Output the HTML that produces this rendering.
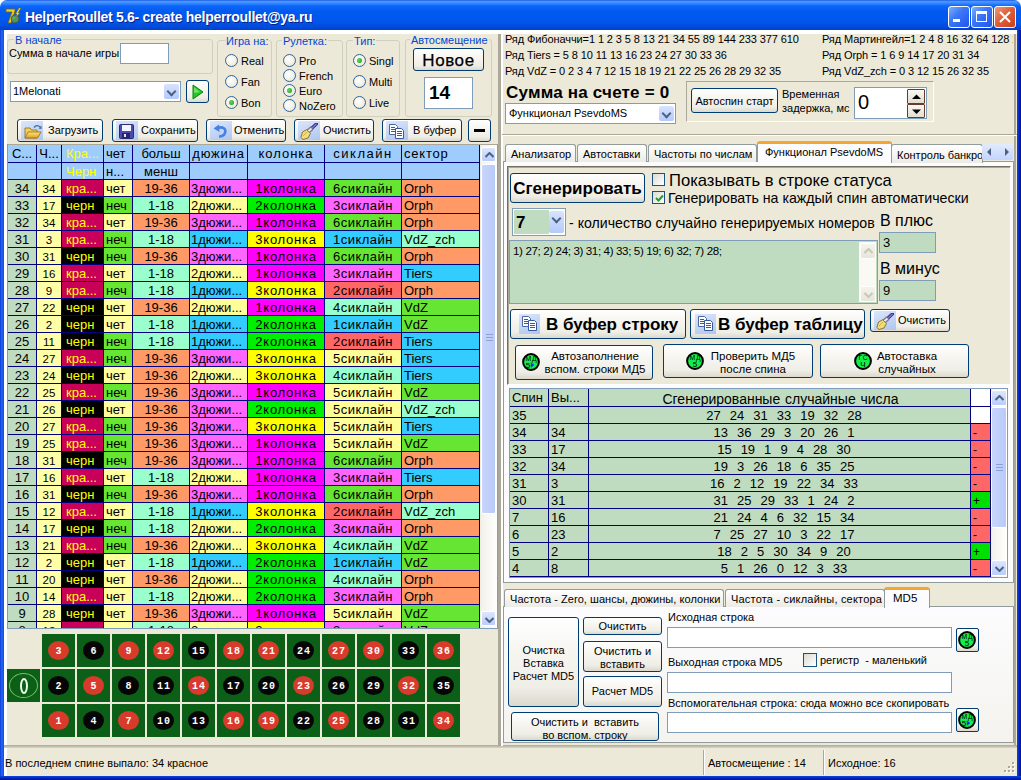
<!DOCTYPE html><html><head><meta charset="utf-8"><style>*{box-sizing:border-box;margin:0;padding:0}
html,body{width:1021px;height:780px;overflow:hidden;background:#fff}
body{position:relative;font-family:"Liberation Sans",sans-serif;font-size:11px;line-height:13px;color:#000}
.a{position:absolute}
.nw{white-space:nowrap}
#title{left:0;top:0;width:1021px;height:30px;border-radius:7px 7px 0 0;background:linear-gradient(#0C3ED8 0px,#4C9CFF 1px,#3A8CFF 3px,#0E64F8 6px,#005AF0 12px,#0058EE 20px,#004DDD 26px,#0040D0 30px)}
.ttext{color:#fff;font-weight:bold;font-size:14px;line-height:16px;text-shadow:1px 1px 0 #0A1E8C;letter-spacing:-0.28px}
.tb{border:1px solid #fff;border-radius:3px}
#client{left:4px;top:30px;width:1013px;height:746px;background:#ECE9D8}
.grp{border:1px solid #D0D0BF;border-radius:3px}
.cap{color:#0046D5;background:#ECE9D8;padding:0 1px}
.edit{background:#fff;border:1px solid #7F9DB9}
.btn{border:1px solid #003C74;border-radius:3px;background:linear-gradient(#FFFFFF 0%,#F6F5F0 40%,#EEEDE6 80%,#DCD8CC 100%);text-align:center}
.icoarea{background:linear-gradient(160deg,#DCE6FA 0%,#C4D6F6 50%,#AFC6F0 100%)}
.rad{border-radius:50%;border:1px solid #2F64A0;background:radial-gradient(circle at 40% 40%,#fff 0%,#F1EFE2 60%,#DCD9CD 100%)}
.rad.on::after{content:"";position:absolute;left:3px;top:3px;width:5px;height:5px;border-radius:50%;background:radial-gradient(circle at 40% 40%,#60D860,#189818)}
.cbtn{border-radius:2px;background:linear-gradient(#D8E4FE,#B4CAFA)}
.cbtn::after{content:"";position:absolute;left:4px;top:4px;width:5px;height:5px;border-right:2px solid #4D6185;border-bottom:2px solid #4D6185;transform:rotate(45deg)}
.gc{font-size:13px;line-height:16px;overflow:hidden;padding-top:1px}
.sbtn{border-radius:2px;border:1px solid #fff;background:linear-gradient(#DCE6FE,#B9CDFB)}
.sthumb{border-radius:2px;border:1px solid #fff;background:linear-gradient(90deg,#C8D6FC,#B8CAF8)}
.chipn{color:#fff;font-weight:bold;font-size:10px;line-height:13px;text-align:center;font-family:"Liberation Mono",monospace;letter-spacing:1px;text-indent:1px}
.rt{font-size:11px;line-height:13px;letter-spacing:-0.1px}
.spb{border:1px solid #6A3A2A;background:linear-gradient(#F8F8F4,#E0DED0);border-radius:1px}
.chk{border:1px solid #1C5180;background:linear-gradient(135deg,#DCDBD3,#fff)}
.dsb{border:1px solid #fff;border-radius:2px;background:linear-gradient(#F4F3EC,#E8E6DC)}
</style></head><body><div id="title" class="a"></div>
<div id="client" class="a"></div>
<div class="a " style="left:0px;top:30px;width:4px;height:750px;background:linear-gradient(90deg,#0A2CC0 0,#1E62F4 1px,#1A5CF0 3px,#0A4AE0 4px)"></div>
<div class="a " style="left:1017px;top:30px;width:4px;height:750px;background:linear-gradient(90deg,#0A48E4 0,#0838D0 1px,#0424B8 2px,#00149A 4px)"></div>
<div class="a " style="left:0px;top:776px;width:1021px;height:4px;background:linear-gradient(#0A48E4 0,#0838D0 1px,#0424B8 2px,#00149A 4px)"></div>
<div class="a " style="left:1014px;top:34px;width:2px;height:712px;background:#ACA899"></div>
<div class="a " style="left:4px;top:30px;width:1013px;height:4px;background:#fff"></div>
<div class="a " style="left:4px;top:30px;width:3px;height:746px;background:#fff"></div>
<div class="a nw  ttext" style="left:25px;top:9px;">HelperRoullet 5.6- create helperroullet@ya.ru</div>
<svg class="a" style="left:5px;top:7px" width="18" height="18" viewBox="0 0 18 18">
<path d="M1 2 L10 2 L10 4 L6 16 L3 16 L7 5 L1 5 Z" fill="#E8D020" stroke="#806010" stroke-width="0.8"/>
<circle cx="10" cy="12" r="4" fill="#5A8A70" stroke="#304838" stroke-width="0.6"/>
<circle cx="9" cy="11" r="1.5" fill="#40C040"/>
<path d="M14 1 L16 1 L13 6 L15 6 L11 10 L12 7 L10.5 7 Z" fill="#F0E020" stroke="#806010" stroke-width="0.5"/>
</svg>
<div class="a tb" style="left:948px;top:6px;width:22px;height:22px;background:linear-gradient(135deg,#7DB0FF 0%,#3C78F8 40%,#2155E8 100%)"><div class="a" style="left:4px;top:12px;width:7px;height:3px;background:#fff"></div></div>
<div class="a tb" style="left:971px;top:6px;width:22px;height:22px;background:linear-gradient(135deg,#7DB0FF 0%,#3C78F8 40%,#2155E8 100%)"><div class="a" style="left:4px;top:4px;width:11px;height:11px;border:1px solid #fff;border-top-width:3px"></div></div>
<div class="a tb" style="left:994px;top:6px;width:22px;height:22px;background:linear-gradient(135deg,#E89C80 0%,#E0603A 45%,#C8401A 100%)"><svg class="a" style="left:0;top:0" width="21" height="21"><path d="M5 5 L15 15 M15 5 L5 15" stroke="#fff" stroke-width="2"/></svg></div>
<div class="a grp" style="left:7px;top:39px;width:206px;height:35px;"></div>
<div class="a nw cap" style="left:14px;top:34px;">В начале</div>
<div class="a nw " style="left:9px;top:47px;">Сумма в начале игры</div>
<div class="a edit" style="left:120px;top:43px;width:49px;height:21px;"></div>
<div class="a edit" style="left:10px;top:81px;width:171px;height:21px;"><div class="a nw" style="left:2px;top:3px">1Melonati</div><div class="a cbtn" style="left:153px;top:2px;width:15px;height:15px"></div></div>
<div class="a btn" style="left:186px;top:80px;width:23px;height:23px;"><svg class="a" style="left:5px;top:3px" width="12" height="16"><path d="M1 1 L11 8 L1 15 Z" fill="#22C822" stroke="#108010" stroke-width="1"/><path d="M2 3 L8 8 L2 9 Z" fill="#8AF08A" opacity="0.7"/></svg></div>
<div class="a grp" style="left:217px;top:40px;width:55px;height:77px;"></div>
<div class="a nw cap" style="left:225px;top:35px;">Игра на:</div>
<div class="a rad" style="left:225px;top:54px;width:13px;height:13px;"></div>
<div class="a nw " style="left:241px;top:55px;">Real</div>
<div class="a rad" style="left:225px;top:75px;width:13px;height:13px;"></div>
<div class="a nw " style="left:241px;top:76px;">Fan</div>
<div class="a rad on" style="left:225px;top:96px;width:13px;height:13px;"></div>
<div class="a nw " style="left:241px;top:97px;">Bon</div>
<div class="a grp" style="left:276px;top:40px;width:67px;height:77px;"></div>
<div class="a nw cap" style="left:282px;top:35px;">Рулетка:</div>
<div class="a rad" style="left:283px;top:54px;width:13px;height:13px;"></div>
<div class="a nw " style="left:299px;top:55px;">Pro</div>
<div class="a rad" style="left:283px;top:69px;width:13px;height:13px;"></div>
<div class="a nw " style="left:299px;top:70px;">French</div>
<div class="a rad on" style="left:283px;top:84px;width:13px;height:13px;"></div>
<div class="a nw " style="left:299px;top:85px;">Euro</div>
<div class="a rad" style="left:283px;top:99px;width:13px;height:13px;"></div>
<div class="a nw " style="left:299px;top:100px;">NoZero</div>
<div class="a grp" style="left:346px;top:40px;width:54px;height:77px;"></div>
<div class="a nw cap" style="left:353px;top:35px;">Тип:</div>
<div class="a rad on" style="left:353px;top:54px;width:13px;height:13px;"></div>
<div class="a nw " style="left:369px;top:55px;">Singl</div>
<div class="a rad" style="left:353px;top:75px;width:13px;height:13px;"></div>
<div class="a nw " style="left:369px;top:76px;">Multi</div>
<div class="a rad" style="left:353px;top:96px;width:13px;height:13px;"></div>
<div class="a nw " style="left:369px;top:97px;">Live</div>
<div class="a grp" style="left:405px;top:39px;width:87px;height:78px;"></div>
<div class="a nw cap" style="left:410px;top:34px;">Автосмещение</div>
<div class="a btn" style="left:413px;top:48px;width:71px;height:23px;"><div class="a nw" style="left:0;width:69px;top:3px;font-size:17px;line-height:17px;letter-spacing:0.6px;text-align:center;-webkit-text-stroke:0.25px #000">Новое</div></div>
<div class="a edit" style="left:424px;top:77px;width:49px;height:32px;"><div class="a nw" style="left:4px;top:8px;font-size:19px;font-weight:bold">14</div></div>
<div class="a btn" style="left:17px;top:119px;width:86px;height:23px;text-align:left"><div class="a icoarea" style="left:3px;top:1px;width:22px;height:19px"></div><svg class="a" style="left:6px;top:4px" width="18" height="16" viewBox="0 0 18 16"><defs><linearGradient id="fg" x1="0" y1="0" x2="0" y2="1"><stop offset="0" stop-color="#FFE680"/><stop offset="1" stop-color="#E0A018"/></linearGradient></defs><path d="M1 4 L6 4 L7.5 6 L13 6 L13 14 L1 14 Z" fill="#F0D060" stroke="#9A7420" stroke-width="0.9"/><path d="M4 8 L17 8 L13.5 14 L1 14 Z" fill="url(#fg)" stroke="#9A7420" stroke-width="0.9"/><path d="M10 3.5 Q13 0 16 3" fill="none" stroke="#4A6A9A" stroke-width="1.3"/><path d="M14.5 4.5 L17.5 1.5 L17.5 5 Z" fill="#4A6A9A"/></svg><div class="a nw" style="left:30px;top:4px;font-size:11px;font-weight:normal">Загрузить</div></div>
<div class="a btn" style="left:112px;top:119px;width:86px;height:23px;text-align:left"><div class="a icoarea" style="left:3px;top:1px;width:22px;height:19px"></div><svg class="a" style="left:6px;top:4px" width="15" height="15" viewBox="0 0 15 15"><rect x="0.5" y="0.5" width="14" height="14" rx="1" fill="#4A4AB0" stroke="#2A2A78"/><rect x="3" y="1" width="9" height="6" fill="#F4F4FC"/><rect x="3" y="9" width="8" height="5" fill="#26266A"/><rect x="5" y="10" width="2" height="3" fill="#E0E0F0"/></svg><div class="a nw" style="left:28px;top:4px;font-size:11px;font-weight:normal">Сохранить</div></div>
<div class="a btn" style="left:206px;top:119px;width:80px;height:23px;text-align:left"><div class="a icoarea" style="left:3px;top:1px;width:22px;height:19px"></div><svg class="a" style="left:6px;top:4px" width="15" height="15" viewBox="0 0 15 15"><path d="M4.5 4 C10 2 13.5 5 12 9 C11 11.5 8.5 12.5 6 12.5" fill="none" stroke="#4A80E0" stroke-width="2.6"/><path d="M0.5 4.5 L6 0.5 L6.5 8 Z" fill="#4A80E0"/></svg><div class="a nw" style="left:27px;top:4px;font-size:11px;font-weight:normal">Отменить</div></div>
<div class="a btn" style="left:294px;top:119px;width:80px;height:23px;text-align:left"><div class="a icoarea" style="left:3px;top:1px;width:22px;height:19px"></div><svg class="a" style="left:5px;top:3px" width="18" height="17" viewBox="0 0 18 17"><path d="M11 6 L16.5 0.8" stroke="#3A2E88" stroke-width="3.2" stroke-linecap="round"/><path d="M11 6 L16.2 1.2" stroke="#8A7AD8" stroke-width="1.2" stroke-linecap="round"/><path d="M7.5 9 L12 5" stroke="#7A7A88" stroke-width="4.6"/><path d="M8 8.5 L11.5 5.5" stroke="#E8E8F0" stroke-width="2"/><path d="M0.8 14.5 L2.5 9 L6.5 6.8 L10.5 10.5 L8 15 L3 16.5 Z" fill="#F0DC78" stroke="#8A6A20" stroke-width="0.9"/><path d="M3 13 L7 9" stroke="#C8A840" stroke-width="0.8"/></svg><div class="a nw" style="left:28px;top:4px;font-size:11px;font-weight:normal">Очистить</div></div>
<div class="a btn" style="left:382px;top:119px;width:80px;height:23px;text-align:left"><div class="a icoarea" style="left:3px;top:1px;width:22px;height:19px"></div><svg class="a" style="left:6px;top:4px" width="16" height="15" viewBox="0 0 16 15"><path d="M0.5 0.5 H6.5 L8.5 2.5 V10.5 H0.5 Z" fill="#fff" stroke="#4A68A8"/><path d="M2 3.5 H6 M2 5.5 H6 M2 7.5 H6" stroke="#3A58A0" stroke-width="1"/><path d="M6.5 4.5 H12.5 L14.5 6.5 V14.5 H6.5 Z" fill="#fff" stroke="#3A58A0"/><path d="M8 7.5 H13 M8 9.5 H13 M8 11.5 H13" stroke="#3A58A0" stroke-width="1"/></svg><div class="a nw" style="left:30px;top:4px;font-size:11px;font-weight:normal">В буфер</div></div>
<div class="a btn" style="left:468px;top:119px;width:23px;height:23px;"><div class="a" style="left:5px;top:9px;width:11px;height:3px;background:#000"></div></div>
<div class="a " style="left:7px;top:144px;width:491px;height:485px;background:#fff;border:1px solid #7F9DB9;border-top-color:#ACA899"></div>
<div class="a" style="left:8px;top:145px;width:472px;height:483px;background:#000080"></div><div class="a nw gc" style="left:8px;top:145px;width:28px;height:17px;background:#9ECDFD;color:#000;text-align:center;padding-top:1px;letter-spacing:0px">С...</div><div class="a nw gc" style="left:8px;top:163px;width:28px;height:16px;background:#9ECDFD;color:#000;text-align:center;"></div><div class="a nw gc" style="left:37px;top:145px;width:24px;height:17px;background:#9ECDFD;color:#000;text-align:center;padding-top:1px;letter-spacing:0px">Ч...</div><div class="a nw gc" style="left:37px;top:163px;width:24px;height:16px;background:#9ECDFD;color:#000;text-align:center;"></div><div class="a nw gc" style="left:62px;top:145px;width:41px;height:17px;background:#9ECDFD;color:#FFFF00;text-align:left;padding-left:4px;padding-top:1px;letter-spacing:0px">Кра...</div><div class="a nw gc" style="left:62px;top:163px;width:41px;height:16px;background:#9ECDFD;color:#FFFF00;text-align:left;padding-left:4px;">Черн</div><div class="a nw gc" style="left:104px;top:145px;width:28px;height:17px;background:#9ECDFD;color:#000;text-align:left;padding-left:2px;padding-top:1px;letter-spacing:0px">чет</div><div class="a nw gc" style="left:104px;top:163px;width:28px;height:16px;background:#9ECDFD;color:#000;text-align:left;padding-left:2px;">н...</div><div class="a nw gc" style="left:133px;top:145px;width:56px;height:17px;background:#9ECDFD;color:#000;text-align:center;padding-top:1px;letter-spacing:0px">больш</div><div class="a nw gc" style="left:133px;top:163px;width:56px;height:16px;background:#9ECDFD;color:#000;text-align:center;">менш</div><div class="a nw gc" style="left:190px;top:145px;width:57px;height:17px;background:#9ECDFD;color:#000;text-align:center;padding-top:1px;letter-spacing:0.8px">дюжина</div><div class="a nw gc" style="left:190px;top:163px;width:57px;height:16px;background:#9ECDFD;color:#000;text-align:center;"></div><div class="a nw gc" style="left:248px;top:145px;width:76px;height:17px;background:#9ECDFD;color:#000;text-align:center;padding-top:1px;letter-spacing:1.0px">колонка</div><div class="a nw gc" style="left:248px;top:163px;width:76px;height:16px;background:#9ECDFD;color:#000;text-align:center;"></div><div class="a nw gc" style="left:325px;top:145px;width:76px;height:17px;background:#9ECDFD;color:#000;text-align:center;padding-top:1px;letter-spacing:1.5px">сиклайн</div><div class="a nw gc" style="left:325px;top:163px;width:76px;height:16px;background:#9ECDFD;color:#000;text-align:center;"></div><div class="a nw gc" style="left:402px;top:145px;width:77px;height:17px;background:#9ECDFD;color:#000;text-align:left;padding-left:2px;padding-top:1px;letter-spacing:0.8px">сектор</div><div class="a nw gc" style="left:402px;top:163px;width:77px;height:16px;background:#9ECDFD;color:#000;text-align:left;padding-left:2px;"></div><div class="a nw gc" style="left:8px;top:180px;width:28px;height:16px;background:#C0DCC0;color:#000;text-align:center;">34</div><div class="a nw gc" style="left:37px;top:180px;width:24px;height:16px;background:#FFFFA8;color:#000;text-align:center;font-size:11.5px">34</div><div class="a nw gc" style="left:62px;top:180px;width:41px;height:16px;background:#C8005A;color:#FFFF00;text-align:left;padding-left:4px;">кра...</div><div class="a nw gc" style="left:104px;top:180px;width:28px;height:16px;background:#FFFFA0;color:#000;text-align:left;padding-left:2px;">чет</div><div class="a nw gc" style="left:133px;top:180px;width:56px;height:16px;background:#FF9966;color:#000;text-align:center;">19-36</div><div class="a nw gc" style="left:190px;top:180px;width:57px;height:16px;background:#FF66FF;color:#000;text-align:left;padding-left:1px;">3дюжи...</div><div class="a nw gc" style="left:248px;top:180px;width:76px;height:16px;background:#FF00FF;color:#000;text-align:center;letter-spacing:0.75px">1колонка</div><div class="a nw gc" style="left:325px;top:180px;width:76px;height:16px;background:#66E633;color:#000;text-align:center;letter-spacing:0.5px">6сиклайн</div><div class="a nw gc" style="left:402px;top:180px;width:77px;height:16px;background:#FF9966;color:#000;text-align:left;padding-left:2px;">Orph</div><div class="a nw gc" style="left:8px;top:197px;width:28px;height:16px;background:#C0DCC0;color:#000;text-align:center;">33</div><div class="a nw gc" style="left:37px;top:197px;width:24px;height:16px;background:#FFFFA8;color:#000;text-align:center;font-size:11.5px">17</div><div class="a nw gc" style="left:62px;top:197px;width:41px;height:16px;background:#000000;color:#FFFF00;text-align:left;padding-left:4px;">черн</div><div class="a nw gc" style="left:104px;top:197px;width:28px;height:16px;background:#66E633;color:#000;text-align:left;padding-left:2px;">неч</div><div class="a nw gc" style="left:133px;top:197px;width:56px;height:16px;background:#99FFCC;color:#000;text-align:center;">1-18</div><div class="a nw gc" style="left:190px;top:197px;width:57px;height:16px;background:#FFFF99;color:#000;text-align:left;padding-left:1px;">2дюжи...</div><div class="a nw gc" style="left:248px;top:197px;width:76px;height:16px;background:#00EE00;color:#000;text-align:center;letter-spacing:0.75px">2колонка</div><div class="a nw gc" style="left:325px;top:197px;width:76px;height:16px;background:#FF66FF;color:#000;text-align:center;letter-spacing:0.5px">3сиклайн</div><div class="a nw gc" style="left:402px;top:197px;width:77px;height:16px;background:#FF9966;color:#000;text-align:left;padding-left:2px;">Orph</div><div class="a nw gc" style="left:8px;top:214px;width:28px;height:16px;background:#C0DCC0;color:#000;text-align:center;">32</div><div class="a nw gc" style="left:37px;top:214px;width:24px;height:16px;background:#FFFFA8;color:#000;text-align:center;font-size:11.5px">34</div><div class="a nw gc" style="left:62px;top:214px;width:41px;height:16px;background:#C8005A;color:#FFFF00;text-align:left;padding-left:4px;">кра...</div><div class="a nw gc" style="left:104px;top:214px;width:28px;height:16px;background:#FFFFA0;color:#000;text-align:left;padding-left:2px;">чет</div><div class="a nw gc" style="left:133px;top:214px;width:56px;height:16px;background:#FF9966;color:#000;text-align:center;">19-36</div><div class="a nw gc" style="left:190px;top:214px;width:57px;height:16px;background:#FF66FF;color:#000;text-align:left;padding-left:1px;">3дюжи...</div><div class="a nw gc" style="left:248px;top:214px;width:76px;height:16px;background:#FF00FF;color:#000;text-align:center;letter-spacing:0.75px">1колонка</div><div class="a nw gc" style="left:325px;top:214px;width:76px;height:16px;background:#66E633;color:#000;text-align:center;letter-spacing:0.5px">6сиклайн</div><div class="a nw gc" style="left:402px;top:214px;width:77px;height:16px;background:#FF9966;color:#000;text-align:left;padding-left:2px;">Orph</div><div class="a nw gc" style="left:8px;top:231px;width:28px;height:16px;background:#C0DCC0;color:#000;text-align:center;">31</div><div class="a nw gc" style="left:37px;top:231px;width:24px;height:16px;background:#FFFFA8;color:#000;text-align:center;font-size:11.5px">3</div><div class="a nw gc" style="left:62px;top:231px;width:41px;height:16px;background:#C8005A;color:#FFFF00;text-align:left;padding-left:4px;">кра...</div><div class="a nw gc" style="left:104px;top:231px;width:28px;height:16px;background:#66E633;color:#000;text-align:left;padding-left:2px;">неч</div><div class="a nw gc" style="left:133px;top:231px;width:56px;height:16px;background:#99FFCC;color:#000;text-align:center;">1-18</div><div class="a nw gc" style="left:190px;top:231px;width:57px;height:16px;background:#33CCFF;color:#000;text-align:left;padding-left:1px;">1дюжи...</div><div class="a nw gc" style="left:248px;top:231px;width:76px;height:16px;background:#FFFF00;color:#000;text-align:center;letter-spacing:0.75px">3колонка</div><div class="a nw gc" style="left:325px;top:231px;width:76px;height:16px;background:#33CCFF;color:#000;text-align:center;letter-spacing:0.5px">1сиклайн</div><div class="a nw gc" style="left:402px;top:231px;width:77px;height:16px;background:#99FFCC;color:#000;text-align:left;padding-left:2px;">VdZ_zch</div><div class="a nw gc" style="left:8px;top:248px;width:28px;height:16px;background:#C0DCC0;color:#000;text-align:center;">30</div><div class="a nw gc" style="left:37px;top:248px;width:24px;height:16px;background:#FFFFA8;color:#000;text-align:center;font-size:11.5px">31</div><div class="a nw gc" style="left:62px;top:248px;width:41px;height:16px;background:#000000;color:#FFFF00;text-align:left;padding-left:4px;">черн</div><div class="a nw gc" style="left:104px;top:248px;width:28px;height:16px;background:#66E633;color:#000;text-align:left;padding-left:2px;">неч</div><div class="a nw gc" style="left:133px;top:248px;width:56px;height:16px;background:#FF9966;color:#000;text-align:center;">19-36</div><div class="a nw gc" style="left:190px;top:248px;width:57px;height:16px;background:#FF66FF;color:#000;text-align:left;padding-left:1px;">3дюжи...</div><div class="a nw gc" style="left:248px;top:248px;width:76px;height:16px;background:#FF00FF;color:#000;text-align:center;letter-spacing:0.75px">1колонка</div><div class="a nw gc" style="left:325px;top:248px;width:76px;height:16px;background:#66E633;color:#000;text-align:center;letter-spacing:0.5px">6сиклайн</div><div class="a nw gc" style="left:402px;top:248px;width:77px;height:16px;background:#FF9966;color:#000;text-align:left;padding-left:2px;">Orph</div><div class="a nw gc" style="left:8px;top:265px;width:28px;height:16px;background:#C0DCC0;color:#000;text-align:center;">29</div><div class="a nw gc" style="left:37px;top:265px;width:24px;height:16px;background:#FFFFA8;color:#000;text-align:center;font-size:11.5px">16</div><div class="a nw gc" style="left:62px;top:265px;width:41px;height:16px;background:#C8005A;color:#FFFF00;text-align:left;padding-left:4px;">кра...</div><div class="a nw gc" style="left:104px;top:265px;width:28px;height:16px;background:#FFFFA0;color:#000;text-align:left;padding-left:2px;">чет</div><div class="a nw gc" style="left:133px;top:265px;width:56px;height:16px;background:#99FFCC;color:#000;text-align:center;">1-18</div><div class="a nw gc" style="left:190px;top:265px;width:57px;height:16px;background:#FFFF99;color:#000;text-align:left;padding-left:1px;">2дюжи...</div><div class="a nw gc" style="left:248px;top:265px;width:76px;height:16px;background:#FF00FF;color:#000;text-align:center;letter-spacing:0.75px">1колонка</div><div class="a nw gc" style="left:325px;top:265px;width:76px;height:16px;background:#FF66FF;color:#000;text-align:center;letter-spacing:0.5px">3сиклайн</div><div class="a nw gc" style="left:402px;top:265px;width:77px;height:16px;background:#33CCFF;color:#000;text-align:left;padding-left:2px;">Tiers</div><div class="a nw gc" style="left:8px;top:282px;width:28px;height:16px;background:#C0DCC0;color:#000;text-align:center;">28</div><div class="a nw gc" style="left:37px;top:282px;width:24px;height:16px;background:#FFFFA8;color:#000;text-align:center;font-size:11.5px">9</div><div class="a nw gc" style="left:62px;top:282px;width:41px;height:16px;background:#C8005A;color:#FFFF00;text-align:left;padding-left:4px;">кра...</div><div class="a nw gc" style="left:104px;top:282px;width:28px;height:16px;background:#66E633;color:#000;text-align:left;padding-left:2px;">неч</div><div class="a nw gc" style="left:133px;top:282px;width:56px;height:16px;background:#99FFCC;color:#000;text-align:center;">1-18</div><div class="a nw gc" style="left:190px;top:282px;width:57px;height:16px;background:#33CCFF;color:#000;text-align:left;padding-left:1px;">1дюжи...</div><div class="a nw gc" style="left:248px;top:282px;width:76px;height:16px;background:#FFFF00;color:#000;text-align:center;letter-spacing:0.75px">3колонка</div><div class="a nw gc" style="left:325px;top:282px;width:76px;height:16px;background:#FF6666;color:#000;text-align:center;letter-spacing:0.5px">2сиклайн</div><div class="a nw gc" style="left:402px;top:282px;width:77px;height:16px;background:#FF9966;color:#000;text-align:left;padding-left:2px;">Orph</div><div class="a nw gc" style="left:8px;top:299px;width:28px;height:16px;background:#C0DCC0;color:#000;text-align:center;">27</div><div class="a nw gc" style="left:37px;top:299px;width:24px;height:16px;background:#FFFFA8;color:#000;text-align:center;font-size:11.5px">22</div><div class="a nw gc" style="left:62px;top:299px;width:41px;height:16px;background:#000000;color:#FFFF00;text-align:left;padding-left:4px;">черн</div><div class="a nw gc" style="left:104px;top:299px;width:28px;height:16px;background:#FFFFA0;color:#000;text-align:left;padding-left:2px;">чет</div><div class="a nw gc" style="left:133px;top:299px;width:56px;height:16px;background:#FF9966;color:#000;text-align:center;">19-36</div><div class="a nw gc" style="left:190px;top:299px;width:57px;height:16px;background:#FFFF99;color:#000;text-align:left;padding-left:1px;">2дюжи...</div><div class="a nw gc" style="left:248px;top:299px;width:76px;height:16px;background:#FF00FF;color:#000;text-align:center;letter-spacing:0.75px">1колонка</div><div class="a nw gc" style="left:325px;top:299px;width:76px;height:16px;background:#99FFCC;color:#000;text-align:center;letter-spacing:0.5px">4сиклайн</div><div class="a nw gc" style="left:402px;top:299px;width:77px;height:16px;background:#66E633;color:#000;text-align:left;padding-left:2px;">VdZ</div><div class="a nw gc" style="left:8px;top:316px;width:28px;height:16px;background:#C0DCC0;color:#000;text-align:center;">26</div><div class="a nw gc" style="left:37px;top:316px;width:24px;height:16px;background:#FFFFA8;color:#000;text-align:center;font-size:11.5px">2</div><div class="a nw gc" style="left:62px;top:316px;width:41px;height:16px;background:#000000;color:#FFFF00;text-align:left;padding-left:4px;">черн</div><div class="a nw gc" style="left:104px;top:316px;width:28px;height:16px;background:#FFFFA0;color:#000;text-align:left;padding-left:2px;">чет</div><div class="a nw gc" style="left:133px;top:316px;width:56px;height:16px;background:#99FFCC;color:#000;text-align:center;">1-18</div><div class="a nw gc" style="left:190px;top:316px;width:57px;height:16px;background:#33CCFF;color:#000;text-align:left;padding-left:1px;">1дюжи...</div><div class="a nw gc" style="left:248px;top:316px;width:76px;height:16px;background:#00EE00;color:#000;text-align:center;letter-spacing:0.75px">2колонка</div><div class="a nw gc" style="left:325px;top:316px;width:76px;height:16px;background:#33CCFF;color:#000;text-align:center;letter-spacing:0.5px">1сиклайн</div><div class="a nw gc" style="left:402px;top:316px;width:77px;height:16px;background:#66E633;color:#000;text-align:left;padding-left:2px;">VdZ</div><div class="a nw gc" style="left:8px;top:333px;width:28px;height:16px;background:#C0DCC0;color:#000;text-align:center;">25</div><div class="a nw gc" style="left:37px;top:333px;width:24px;height:16px;background:#FFFFA8;color:#000;text-align:center;font-size:11.5px">11</div><div class="a nw gc" style="left:62px;top:333px;width:41px;height:16px;background:#000000;color:#FFFF00;text-align:left;padding-left:4px;">черн</div><div class="a nw gc" style="left:104px;top:333px;width:28px;height:16px;background:#66E633;color:#000;text-align:left;padding-left:2px;">неч</div><div class="a nw gc" style="left:133px;top:333px;width:56px;height:16px;background:#99FFCC;color:#000;text-align:center;">1-18</div><div class="a nw gc" style="left:190px;top:333px;width:57px;height:16px;background:#33CCFF;color:#000;text-align:left;padding-left:1px;">1дюжи...</div><div class="a nw gc" style="left:248px;top:333px;width:76px;height:16px;background:#00EE00;color:#000;text-align:center;letter-spacing:0.75px">2колонка</div><div class="a nw gc" style="left:325px;top:333px;width:76px;height:16px;background:#FF6666;color:#000;text-align:center;letter-spacing:0.5px">2сиклайн</div><div class="a nw gc" style="left:402px;top:333px;width:77px;height:16px;background:#33CCFF;color:#000;text-align:left;padding-left:2px;">Tiers</div><div class="a nw gc" style="left:8px;top:350px;width:28px;height:16px;background:#C0DCC0;color:#000;text-align:center;">24</div><div class="a nw gc" style="left:37px;top:350px;width:24px;height:16px;background:#FFFFA8;color:#000;text-align:center;font-size:11.5px">27</div><div class="a nw gc" style="left:62px;top:350px;width:41px;height:16px;background:#C8005A;color:#FFFF00;text-align:left;padding-left:4px;">кра...</div><div class="a nw gc" style="left:104px;top:350px;width:28px;height:16px;background:#66E633;color:#000;text-align:left;padding-left:2px;">неч</div><div class="a nw gc" style="left:133px;top:350px;width:56px;height:16px;background:#FF9966;color:#000;text-align:center;">19-36</div><div class="a nw gc" style="left:190px;top:350px;width:57px;height:16px;background:#FF66FF;color:#000;text-align:left;padding-left:1px;">3дюжи...</div><div class="a nw gc" style="left:248px;top:350px;width:76px;height:16px;background:#FFFF00;color:#000;text-align:center;letter-spacing:0.75px">3колонка</div><div class="a nw gc" style="left:325px;top:350px;width:76px;height:16px;background:#FFFF99;color:#000;text-align:center;letter-spacing:0.5px">5сиклайн</div><div class="a nw gc" style="left:402px;top:350px;width:77px;height:16px;background:#33CCFF;color:#000;text-align:left;padding-left:2px;">Tiers</div><div class="a nw gc" style="left:8px;top:367px;width:28px;height:16px;background:#C0DCC0;color:#000;text-align:center;">23</div><div class="a nw gc" style="left:37px;top:367px;width:24px;height:16px;background:#FFFFA8;color:#000;text-align:center;font-size:11.5px">24</div><div class="a nw gc" style="left:62px;top:367px;width:41px;height:16px;background:#000000;color:#FFFF00;text-align:left;padding-left:4px;">черн</div><div class="a nw gc" style="left:104px;top:367px;width:28px;height:16px;background:#FFFFA0;color:#000;text-align:left;padding-left:2px;">чет</div><div class="a nw gc" style="left:133px;top:367px;width:56px;height:16px;background:#FF9966;color:#000;text-align:center;">19-36</div><div class="a nw gc" style="left:190px;top:367px;width:57px;height:16px;background:#FFFF99;color:#000;text-align:left;padding-left:1px;">2дюжи...</div><div class="a nw gc" style="left:248px;top:367px;width:76px;height:16px;background:#FFFF00;color:#000;text-align:center;letter-spacing:0.75px">3колонка</div><div class="a nw gc" style="left:325px;top:367px;width:76px;height:16px;background:#99FFCC;color:#000;text-align:center;letter-spacing:0.5px">4сиклайн</div><div class="a nw gc" style="left:402px;top:367px;width:77px;height:16px;background:#33CCFF;color:#000;text-align:left;padding-left:2px;">Tiers</div><div class="a nw gc" style="left:8px;top:384px;width:28px;height:16px;background:#C0DCC0;color:#000;text-align:center;">22</div><div class="a nw gc" style="left:37px;top:384px;width:24px;height:16px;background:#FFFFA8;color:#000;text-align:center;font-size:11.5px">25</div><div class="a nw gc" style="left:62px;top:384px;width:41px;height:16px;background:#C8005A;color:#FFFF00;text-align:left;padding-left:4px;">кра...</div><div class="a nw gc" style="left:104px;top:384px;width:28px;height:16px;background:#66E633;color:#000;text-align:left;padding-left:2px;">неч</div><div class="a nw gc" style="left:133px;top:384px;width:56px;height:16px;background:#FF9966;color:#000;text-align:center;">19-36</div><div class="a nw gc" style="left:190px;top:384px;width:57px;height:16px;background:#FF66FF;color:#000;text-align:left;padding-left:1px;">3дюжи...</div><div class="a nw gc" style="left:248px;top:384px;width:76px;height:16px;background:#FF00FF;color:#000;text-align:center;letter-spacing:0.75px">1колонка</div><div class="a nw gc" style="left:325px;top:384px;width:76px;height:16px;background:#FFFF99;color:#000;text-align:center;letter-spacing:0.5px">5сиклайн</div><div class="a nw gc" style="left:402px;top:384px;width:77px;height:16px;background:#66E633;color:#000;text-align:left;padding-left:2px;">VdZ</div><div class="a nw gc" style="left:8px;top:401px;width:28px;height:16px;background:#C0DCC0;color:#000;text-align:center;">21</div><div class="a nw gc" style="left:37px;top:401px;width:24px;height:16px;background:#FFFFA8;color:#000;text-align:center;font-size:11.5px">26</div><div class="a nw gc" style="left:62px;top:401px;width:41px;height:16px;background:#000000;color:#FFFF00;text-align:left;padding-left:4px;">черн</div><div class="a nw gc" style="left:104px;top:401px;width:28px;height:16px;background:#FFFFA0;color:#000;text-align:left;padding-left:2px;">чет</div><div class="a nw gc" style="left:133px;top:401px;width:56px;height:16px;background:#FF9966;color:#000;text-align:center;">19-36</div><div class="a nw gc" style="left:190px;top:401px;width:57px;height:16px;background:#FF66FF;color:#000;text-align:left;padding-left:1px;">3дюжи...</div><div class="a nw gc" style="left:248px;top:401px;width:76px;height:16px;background:#00EE00;color:#000;text-align:center;letter-spacing:0.75px">2колонка</div><div class="a nw gc" style="left:325px;top:401px;width:76px;height:16px;background:#FFFF99;color:#000;text-align:center;letter-spacing:0.5px">5сиклайн</div><div class="a nw gc" style="left:402px;top:401px;width:77px;height:16px;background:#99FFCC;color:#000;text-align:left;padding-left:2px;">VdZ_zch</div><div class="a nw gc" style="left:8px;top:418px;width:28px;height:16px;background:#C0DCC0;color:#000;text-align:center;">20</div><div class="a nw gc" style="left:37px;top:418px;width:24px;height:16px;background:#FFFFA8;color:#000;text-align:center;font-size:11.5px">27</div><div class="a nw gc" style="left:62px;top:418px;width:41px;height:16px;background:#C8005A;color:#FFFF00;text-align:left;padding-left:4px;">кра...</div><div class="a nw gc" style="left:104px;top:418px;width:28px;height:16px;background:#66E633;color:#000;text-align:left;padding-left:2px;">неч</div><div class="a nw gc" style="left:133px;top:418px;width:56px;height:16px;background:#FF9966;color:#000;text-align:center;">19-36</div><div class="a nw gc" style="left:190px;top:418px;width:57px;height:16px;background:#FF66FF;color:#000;text-align:left;padding-left:1px;">3дюжи...</div><div class="a nw gc" style="left:248px;top:418px;width:76px;height:16px;background:#FFFF00;color:#000;text-align:center;letter-spacing:0.75px">3колонка</div><div class="a nw gc" style="left:325px;top:418px;width:76px;height:16px;background:#FFFF99;color:#000;text-align:center;letter-spacing:0.5px">5сиклайн</div><div class="a nw gc" style="left:402px;top:418px;width:77px;height:16px;background:#33CCFF;color:#000;text-align:left;padding-left:2px;">Tiers</div><div class="a nw gc" style="left:8px;top:435px;width:28px;height:16px;background:#C0DCC0;color:#000;text-align:center;">19</div><div class="a nw gc" style="left:37px;top:435px;width:24px;height:16px;background:#FFFFA8;color:#000;text-align:center;font-size:11.5px">25</div><div class="a nw gc" style="left:62px;top:435px;width:41px;height:16px;background:#C8005A;color:#FFFF00;text-align:left;padding-left:4px;">кра...</div><div class="a nw gc" style="left:104px;top:435px;width:28px;height:16px;background:#66E633;color:#000;text-align:left;padding-left:2px;">неч</div><div class="a nw gc" style="left:133px;top:435px;width:56px;height:16px;background:#FF9966;color:#000;text-align:center;">19-36</div><div class="a nw gc" style="left:190px;top:435px;width:57px;height:16px;background:#FF66FF;color:#000;text-align:left;padding-left:1px;">3дюжи...</div><div class="a nw gc" style="left:248px;top:435px;width:76px;height:16px;background:#FF00FF;color:#000;text-align:center;letter-spacing:0.75px">1колонка</div><div class="a nw gc" style="left:325px;top:435px;width:76px;height:16px;background:#FFFF99;color:#000;text-align:center;letter-spacing:0.5px">5сиклайн</div><div class="a nw gc" style="left:402px;top:435px;width:77px;height:16px;background:#66E633;color:#000;text-align:left;padding-left:2px;">VdZ</div><div class="a nw gc" style="left:8px;top:452px;width:28px;height:16px;background:#C0DCC0;color:#000;text-align:center;">18</div><div class="a nw gc" style="left:37px;top:452px;width:24px;height:16px;background:#FFFFA8;color:#000;text-align:center;font-size:11.5px">31</div><div class="a nw gc" style="left:62px;top:452px;width:41px;height:16px;background:#000000;color:#FFFF00;text-align:left;padding-left:4px;">черн</div><div class="a nw gc" style="left:104px;top:452px;width:28px;height:16px;background:#66E633;color:#000;text-align:left;padding-left:2px;">неч</div><div class="a nw gc" style="left:133px;top:452px;width:56px;height:16px;background:#FF9966;color:#000;text-align:center;">19-36</div><div class="a nw gc" style="left:190px;top:452px;width:57px;height:16px;background:#FF66FF;color:#000;text-align:left;padding-left:1px;">3дюжи...</div><div class="a nw gc" style="left:248px;top:452px;width:76px;height:16px;background:#FF00FF;color:#000;text-align:center;letter-spacing:0.75px">1колонка</div><div class="a nw gc" style="left:325px;top:452px;width:76px;height:16px;background:#66E633;color:#000;text-align:center;letter-spacing:0.5px">6сиклайн</div><div class="a nw gc" style="left:402px;top:452px;width:77px;height:16px;background:#FF9966;color:#000;text-align:left;padding-left:2px;">Orph</div><div class="a nw gc" style="left:8px;top:469px;width:28px;height:16px;background:#C0DCC0;color:#000;text-align:center;">17</div><div class="a nw gc" style="left:37px;top:469px;width:24px;height:16px;background:#FFFFA8;color:#000;text-align:center;font-size:11.5px">16</div><div class="a nw gc" style="left:62px;top:469px;width:41px;height:16px;background:#C8005A;color:#FFFF00;text-align:left;padding-left:4px;">кра...</div><div class="a nw gc" style="left:104px;top:469px;width:28px;height:16px;background:#FFFFA0;color:#000;text-align:left;padding-left:2px;">чет</div><div class="a nw gc" style="left:133px;top:469px;width:56px;height:16px;background:#99FFCC;color:#000;text-align:center;">1-18</div><div class="a nw gc" style="left:190px;top:469px;width:57px;height:16px;background:#FFFF99;color:#000;text-align:left;padding-left:1px;">2дюжи...</div><div class="a nw gc" style="left:248px;top:469px;width:76px;height:16px;background:#FF00FF;color:#000;text-align:center;letter-spacing:0.75px">1колонка</div><div class="a nw gc" style="left:325px;top:469px;width:76px;height:16px;background:#FF66FF;color:#000;text-align:center;letter-spacing:0.5px">3сиклайн</div><div class="a nw gc" style="left:402px;top:469px;width:77px;height:16px;background:#33CCFF;color:#000;text-align:left;padding-left:2px;">Tiers</div><div class="a nw gc" style="left:8px;top:486px;width:28px;height:16px;background:#C0DCC0;color:#000;text-align:center;">16</div><div class="a nw gc" style="left:37px;top:486px;width:24px;height:16px;background:#FFFFA8;color:#000;text-align:center;font-size:11.5px">31</div><div class="a nw gc" style="left:62px;top:486px;width:41px;height:16px;background:#000000;color:#FFFF00;text-align:left;padding-left:4px;">черн</div><div class="a nw gc" style="left:104px;top:486px;width:28px;height:16px;background:#66E633;color:#000;text-align:left;padding-left:2px;">неч</div><div class="a nw gc" style="left:133px;top:486px;width:56px;height:16px;background:#FF9966;color:#000;text-align:center;">19-36</div><div class="a nw gc" style="left:190px;top:486px;width:57px;height:16px;background:#FF66FF;color:#000;text-align:left;padding-left:1px;">3дюжи...</div><div class="a nw gc" style="left:248px;top:486px;width:76px;height:16px;background:#FF00FF;color:#000;text-align:center;letter-spacing:0.75px">1колонка</div><div class="a nw gc" style="left:325px;top:486px;width:76px;height:16px;background:#66E633;color:#000;text-align:center;letter-spacing:0.5px">6сиклайн</div><div class="a nw gc" style="left:402px;top:486px;width:77px;height:16px;background:#FF9966;color:#000;text-align:left;padding-left:2px;">Orph</div><div class="a nw gc" style="left:8px;top:503px;width:28px;height:16px;background:#C0DCC0;color:#000;text-align:center;">15</div><div class="a nw gc" style="left:37px;top:503px;width:24px;height:16px;background:#FFFFA8;color:#000;text-align:center;font-size:11.5px">12</div><div class="a nw gc" style="left:62px;top:503px;width:41px;height:16px;background:#C8005A;color:#FFFF00;text-align:left;padding-left:4px;">кра...</div><div class="a nw gc" style="left:104px;top:503px;width:28px;height:16px;background:#FFFFA0;color:#000;text-align:left;padding-left:2px;">чет</div><div class="a nw gc" style="left:133px;top:503px;width:56px;height:16px;background:#99FFCC;color:#000;text-align:center;">1-18</div><div class="a nw gc" style="left:190px;top:503px;width:57px;height:16px;background:#33CCFF;color:#000;text-align:left;padding-left:1px;">1дюжи...</div><div class="a nw gc" style="left:248px;top:503px;width:76px;height:16px;background:#FFFF00;color:#000;text-align:center;letter-spacing:0.75px">3колонка</div><div class="a nw gc" style="left:325px;top:503px;width:76px;height:16px;background:#FF6666;color:#000;text-align:center;letter-spacing:0.5px">2сиклайн</div><div class="a nw gc" style="left:402px;top:503px;width:77px;height:16px;background:#99FFCC;color:#000;text-align:left;padding-left:2px;">VdZ_zch</div><div class="a nw gc" style="left:8px;top:520px;width:28px;height:16px;background:#C0DCC0;color:#000;text-align:center;">14</div><div class="a nw gc" style="left:37px;top:520px;width:24px;height:16px;background:#FFFFA8;color:#000;text-align:center;font-size:11.5px">17</div><div class="a nw gc" style="left:62px;top:520px;width:41px;height:16px;background:#000000;color:#FFFF00;text-align:left;padding-left:4px;">черн</div><div class="a nw gc" style="left:104px;top:520px;width:28px;height:16px;background:#66E633;color:#000;text-align:left;padding-left:2px;">неч</div><div class="a nw gc" style="left:133px;top:520px;width:56px;height:16px;background:#99FFCC;color:#000;text-align:center;">1-18</div><div class="a nw gc" style="left:190px;top:520px;width:57px;height:16px;background:#FFFF99;color:#000;text-align:left;padding-left:1px;">2дюжи...</div><div class="a nw gc" style="left:248px;top:520px;width:76px;height:16px;background:#00EE00;color:#000;text-align:center;letter-spacing:0.75px">2колонка</div><div class="a nw gc" style="left:325px;top:520px;width:76px;height:16px;background:#FF66FF;color:#000;text-align:center;letter-spacing:0.5px">3сиклайн</div><div class="a nw gc" style="left:402px;top:520px;width:77px;height:16px;background:#FF9966;color:#000;text-align:left;padding-left:2px;">Orph</div><div class="a nw gc" style="left:8px;top:537px;width:28px;height:16px;background:#C0DCC0;color:#000;text-align:center;">13</div><div class="a nw gc" style="left:37px;top:537px;width:24px;height:16px;background:#FFFFA8;color:#000;text-align:center;font-size:11.5px">21</div><div class="a nw gc" style="left:62px;top:537px;width:41px;height:16px;background:#C8005A;color:#FFFF00;text-align:left;padding-left:4px;">кра...</div><div class="a nw gc" style="left:104px;top:537px;width:28px;height:16px;background:#66E633;color:#000;text-align:left;padding-left:2px;">неч</div><div class="a nw gc" style="left:133px;top:537px;width:56px;height:16px;background:#FF9966;color:#000;text-align:center;">19-36</div><div class="a nw gc" style="left:190px;top:537px;width:57px;height:16px;background:#FFFF99;color:#000;text-align:left;padding-left:1px;">2дюжи...</div><div class="a nw gc" style="left:248px;top:537px;width:76px;height:16px;background:#FFFF00;color:#000;text-align:center;letter-spacing:0.75px">3колонка</div><div class="a nw gc" style="left:325px;top:537px;width:76px;height:16px;background:#99FFCC;color:#000;text-align:center;letter-spacing:0.5px">4сиклайн</div><div class="a nw gc" style="left:402px;top:537px;width:77px;height:16px;background:#66E633;color:#000;text-align:left;padding-left:2px;">VdZ</div><div class="a nw gc" style="left:8px;top:554px;width:28px;height:16px;background:#C0DCC0;color:#000;text-align:center;">12</div><div class="a nw gc" style="left:37px;top:554px;width:24px;height:16px;background:#FFFFA8;color:#000;text-align:center;font-size:11.5px">2</div><div class="a nw gc" style="left:62px;top:554px;width:41px;height:16px;background:#000000;color:#FFFF00;text-align:left;padding-left:4px;">черн</div><div class="a nw gc" style="left:104px;top:554px;width:28px;height:16px;background:#FFFFA0;color:#000;text-align:left;padding-left:2px;">чет</div><div class="a nw gc" style="left:133px;top:554px;width:56px;height:16px;background:#99FFCC;color:#000;text-align:center;">1-18</div><div class="a nw gc" style="left:190px;top:554px;width:57px;height:16px;background:#33CCFF;color:#000;text-align:left;padding-left:1px;">1дюжи...</div><div class="a nw gc" style="left:248px;top:554px;width:76px;height:16px;background:#00EE00;color:#000;text-align:center;letter-spacing:0.75px">2колонка</div><div class="a nw gc" style="left:325px;top:554px;width:76px;height:16px;background:#33CCFF;color:#000;text-align:center;letter-spacing:0.5px">1сиклайн</div><div class="a nw gc" style="left:402px;top:554px;width:77px;height:16px;background:#66E633;color:#000;text-align:left;padding-left:2px;">VdZ</div><div class="a nw gc" style="left:8px;top:571px;width:28px;height:16px;background:#C0DCC0;color:#000;text-align:center;">11</div><div class="a nw gc" style="left:37px;top:571px;width:24px;height:16px;background:#FFFFA8;color:#000;text-align:center;font-size:11.5px">20</div><div class="a nw gc" style="left:62px;top:571px;width:41px;height:16px;background:#000000;color:#FFFF00;text-align:left;padding-left:4px;">черн</div><div class="a nw gc" style="left:104px;top:571px;width:28px;height:16px;background:#FFFFA0;color:#000;text-align:left;padding-left:2px;">чет</div><div class="a nw gc" style="left:133px;top:571px;width:56px;height:16px;background:#FF9966;color:#000;text-align:center;">19-36</div><div class="a nw gc" style="left:190px;top:571px;width:57px;height:16px;background:#FFFF99;color:#000;text-align:left;padding-left:1px;">2дюжи...</div><div class="a nw gc" style="left:248px;top:571px;width:76px;height:16px;background:#00EE00;color:#000;text-align:center;letter-spacing:0.75px">2колонка</div><div class="a nw gc" style="left:325px;top:571px;width:76px;height:16px;background:#99FFCC;color:#000;text-align:center;letter-spacing:0.5px">4сиклайн</div><div class="a nw gc" style="left:402px;top:571px;width:77px;height:16px;background:#FF9966;color:#000;text-align:left;padding-left:2px;">Orph</div><div class="a nw gc" style="left:8px;top:588px;width:28px;height:16px;background:#C0DCC0;color:#000;text-align:center;">10</div><div class="a nw gc" style="left:37px;top:588px;width:24px;height:16px;background:#FFFFA8;color:#000;text-align:center;font-size:11.5px">14</div><div class="a nw gc" style="left:62px;top:588px;width:41px;height:16px;background:#C8005A;color:#FFFF00;text-align:left;padding-left:4px;">кра...</div><div class="a nw gc" style="left:104px;top:588px;width:28px;height:16px;background:#FFFFA0;color:#000;text-align:left;padding-left:2px;">чет</div><div class="a nw gc" style="left:133px;top:588px;width:56px;height:16px;background:#99FFCC;color:#000;text-align:center;">1-18</div><div class="a nw gc" style="left:190px;top:588px;width:57px;height:16px;background:#FFFF99;color:#000;text-align:left;padding-left:1px;">2дюжи...</div><div class="a nw gc" style="left:248px;top:588px;width:76px;height:16px;background:#00EE00;color:#000;text-align:center;letter-spacing:0.75px">2колонка</div><div class="a nw gc" style="left:325px;top:588px;width:76px;height:16px;background:#FF66FF;color:#000;text-align:center;letter-spacing:0.5px">3сиклайн</div><div class="a nw gc" style="left:402px;top:588px;width:77px;height:16px;background:#FF9966;color:#000;text-align:left;padding-left:2px;">Orph</div><div class="a nw gc" style="left:8px;top:605px;width:28px;height:16px;background:#C0DCC0;color:#000;text-align:center;">9</div><div class="a nw gc" style="left:37px;top:605px;width:24px;height:16px;background:#FFFFA8;color:#000;text-align:center;font-size:11.5px">28</div><div class="a nw gc" style="left:62px;top:605px;width:41px;height:16px;background:#000000;color:#FFFF00;text-align:left;padding-left:4px;">черн</div><div class="a nw gc" style="left:104px;top:605px;width:28px;height:16px;background:#FFFFA0;color:#000;text-align:left;padding-left:2px;">чет</div><div class="a nw gc" style="left:133px;top:605px;width:56px;height:16px;background:#FF9966;color:#000;text-align:center;">19-36</div><div class="a nw gc" style="left:190px;top:605px;width:57px;height:16px;background:#FF66FF;color:#000;text-align:left;padding-left:1px;">3дюжи...</div><div class="a nw gc" style="left:248px;top:605px;width:76px;height:16px;background:#FF00FF;color:#000;text-align:center;letter-spacing:0.75px">1колонка</div><div class="a nw gc" style="left:325px;top:605px;width:76px;height:16px;background:#FFFF99;color:#000;text-align:center;letter-spacing:0.5px">5сиклайн</div><div class="a nw gc" style="left:402px;top:605px;width:77px;height:16px;background:#66E633;color:#000;text-align:left;padding-left:2px;">VdZ</div><div class="a nw gc" style="left:8px;top:622px;width:28px;height:6px;background:#C0DCC0;color:#000;text-align:center;">8</div><div class="a nw gc" style="left:37px;top:622px;width:24px;height:6px;background:#FFFFA8;color:#000;text-align:center;font-size:11.5px">18</div><div class="a nw gc" style="left:62px;top:622px;width:41px;height:6px;background:#C8005A;color:#FFFF00;text-align:left;padding-left:4px;">кра...</div><div class="a nw gc" style="left:104px;top:622px;width:28px;height:6px;background:#FFFFA0;color:#000;text-align:left;padding-left:2px;">чет</div><div class="a nw gc" style="left:133px;top:622px;width:56px;height:6px;background:#99FFCC;color:#000;text-align:center;">1-18</div><div class="a nw gc" style="left:190px;top:622px;width:57px;height:6px;background:#FFFF99;color:#000;text-align:left;padding-left:1px;">2дюжи...</div><div class="a nw gc" style="left:248px;top:622px;width:76px;height:6px;background:#FFFF00;color:#000;text-align:center;letter-spacing:0.75px">3колонка</div><div class="a nw gc" style="left:325px;top:622px;width:76px;height:6px;background:#FF66FF;color:#000;text-align:center;letter-spacing:0.5px">3сиклайн</div><div class="a nw gc" style="left:402px;top:622px;width:77px;height:6px;background:#66E633;color:#000;text-align:left;padding-left:2px;">VdZ</div>
<div class="a " style="left:480px;top:145px;width:16px;height:483px;background:linear-gradient(90deg,#F3F1EC,#FEFEFB);border-left:1px solid #EEEDE5"></div>
<div class="a sbtn" style="left:481px;top:147px;width:15px;height:15px;"><svg class="a" style="left:3px;top:4px" width="9" height="6"><path d="M0.5 5 L4.5 1 L8.5 5" fill="none" stroke="#4D6185" stroke-width="2"/></svg></div>
<div class="a sthumb" style="left:481px;top:164px;width:15px;height:350px;"><div class="a" style="left:4px;top:169px;width:7px;height:7px;border-top:1px solid #8CA0D8;border-bottom:1px solid #8CA0D8"><div class="a" style="left:0;top:2px;width:7px;height:1px;background:#8CA0D8"></div></div></div>
<div class="a sbtn" style="left:481px;top:611px;width:15px;height:15px;"><svg class="a" style="left:3px;top:5px" width="9" height="6"><path d="M0.5 1 L4.5 5 L8.5 1" fill="none" stroke="#4D6185" stroke-width="2"/></svg></div>
<div class="a" style="left:42px;top:634px;width:33px;height:33px;background:#0C5F16"></div><div class="a" style="left:48px;top:641px;width:21px;height:19px;border-radius:50%;background:#D83A2C"></div><div class="a nw chipn" style="left:42px;top:645px;width:33px">3</div><div class="a" style="left:42px;top:669px;width:33px;height:33px;background:#0C5F16"></div><div class="a" style="left:48px;top:676px;width:21px;height:19px;border-radius:50%;background:#050505"></div><div class="a nw chipn" style="left:42px;top:680px;width:33px">2</div><div class="a" style="left:42px;top:704px;width:33px;height:33px;background:#0C5F16"></div><div class="a" style="left:48px;top:711px;width:21px;height:19px;border-radius:50%;background:#D83A2C"></div><div class="a nw chipn" style="left:42px;top:715px;width:33px">1</div><div class="a" style="left:77px;top:634px;width:33px;height:33px;background:#0C5F16"></div><div class="a" style="left:83px;top:641px;width:21px;height:19px;border-radius:50%;background:#050505"></div><div class="a nw chipn" style="left:77px;top:645px;width:33px">6</div><div class="a" style="left:77px;top:669px;width:33px;height:33px;background:#0C5F16"></div><div class="a" style="left:83px;top:676px;width:21px;height:19px;border-radius:50%;background:#D83A2C"></div><div class="a nw chipn" style="left:77px;top:680px;width:33px">5</div><div class="a" style="left:77px;top:704px;width:33px;height:33px;background:#0C5F16"></div><div class="a" style="left:83px;top:711px;width:21px;height:19px;border-radius:50%;background:#050505"></div><div class="a nw chipn" style="left:77px;top:715px;width:33px">4</div><div class="a" style="left:112px;top:634px;width:33px;height:33px;background:#0C5F16"></div><div class="a" style="left:118px;top:641px;width:21px;height:19px;border-radius:50%;background:#D83A2C"></div><div class="a nw chipn" style="left:112px;top:645px;width:33px">9</div><div class="a" style="left:112px;top:669px;width:33px;height:33px;background:#0C5F16"></div><div class="a" style="left:118px;top:676px;width:21px;height:19px;border-radius:50%;background:#050505"></div><div class="a nw chipn" style="left:112px;top:680px;width:33px">8</div><div class="a" style="left:112px;top:704px;width:33px;height:33px;background:#0C5F16"></div><div class="a" style="left:118px;top:711px;width:21px;height:19px;border-radius:50%;background:#D83A2C"></div><div class="a nw chipn" style="left:112px;top:715px;width:33px">7</div><div class="a" style="left:147px;top:634px;width:33px;height:33px;background:#0C5F16"></div><div class="a" style="left:153px;top:641px;width:21px;height:19px;border-radius:50%;background:#D83A2C"></div><div class="a nw chipn" style="left:147px;top:645px;width:33px">12</div><div class="a" style="left:147px;top:669px;width:33px;height:33px;background:#0C5F16"></div><div class="a" style="left:153px;top:676px;width:21px;height:19px;border-radius:50%;background:#050505"></div><div class="a nw chipn" style="left:147px;top:680px;width:33px">11</div><div class="a" style="left:147px;top:704px;width:33px;height:33px;background:#0C5F16"></div><div class="a" style="left:153px;top:711px;width:21px;height:19px;border-radius:50%;background:#050505"></div><div class="a nw chipn" style="left:147px;top:715px;width:33px">10</div><div class="a" style="left:182px;top:634px;width:33px;height:33px;background:#0C5F16"></div><div class="a" style="left:188px;top:641px;width:21px;height:19px;border-radius:50%;background:#050505"></div><div class="a nw chipn" style="left:182px;top:645px;width:33px">15</div><div class="a" style="left:182px;top:669px;width:33px;height:33px;background:#0C5F16"></div><div class="a" style="left:188px;top:676px;width:21px;height:19px;border-radius:50%;background:#D83A2C"></div><div class="a nw chipn" style="left:182px;top:680px;width:33px">14</div><div class="a" style="left:182px;top:704px;width:33px;height:33px;background:#0C5F16"></div><div class="a" style="left:188px;top:711px;width:21px;height:19px;border-radius:50%;background:#050505"></div><div class="a nw chipn" style="left:182px;top:715px;width:33px">13</div><div class="a" style="left:217px;top:634px;width:33px;height:33px;background:#0C5F16"></div><div class="a" style="left:223px;top:641px;width:21px;height:19px;border-radius:50%;background:#D83A2C"></div><div class="a nw chipn" style="left:217px;top:645px;width:33px">18</div><div class="a" style="left:217px;top:669px;width:33px;height:33px;background:#0C5F16"></div><div class="a" style="left:223px;top:676px;width:21px;height:19px;border-radius:50%;background:#050505"></div><div class="a nw chipn" style="left:217px;top:680px;width:33px">17</div><div class="a" style="left:217px;top:704px;width:33px;height:33px;background:#0C5F16"></div><div class="a" style="left:223px;top:711px;width:21px;height:19px;border-radius:50%;background:#D83A2C"></div><div class="a nw chipn" style="left:217px;top:715px;width:33px">16</div><div class="a" style="left:252px;top:634px;width:33px;height:33px;background:#0C5F16"></div><div class="a" style="left:258px;top:641px;width:21px;height:19px;border-radius:50%;background:#D83A2C"></div><div class="a nw chipn" style="left:252px;top:645px;width:33px">21</div><div class="a" style="left:252px;top:669px;width:33px;height:33px;background:#0C5F16"></div><div class="a" style="left:258px;top:676px;width:21px;height:19px;border-radius:50%;background:#050505"></div><div class="a nw chipn" style="left:252px;top:680px;width:33px">20</div><div class="a" style="left:252px;top:704px;width:33px;height:33px;background:#0C5F16"></div><div class="a" style="left:258px;top:711px;width:21px;height:19px;border-radius:50%;background:#D83A2C"></div><div class="a nw chipn" style="left:252px;top:715px;width:33px">19</div><div class="a" style="left:287px;top:634px;width:33px;height:33px;background:#0C5F16"></div><div class="a" style="left:293px;top:641px;width:21px;height:19px;border-radius:50%;background:#050505"></div><div class="a nw chipn" style="left:287px;top:645px;width:33px">24</div><div class="a" style="left:287px;top:669px;width:33px;height:33px;background:#0C5F16"></div><div class="a" style="left:293px;top:676px;width:21px;height:19px;border-radius:50%;background:#D83A2C"></div><div class="a nw chipn" style="left:287px;top:680px;width:33px">23</div><div class="a" style="left:287px;top:704px;width:33px;height:33px;background:#0C5F16"></div><div class="a" style="left:293px;top:711px;width:21px;height:19px;border-radius:50%;background:#050505"></div><div class="a nw chipn" style="left:287px;top:715px;width:33px">22</div><div class="a" style="left:322px;top:634px;width:33px;height:33px;background:#0C5F16"></div><div class="a" style="left:328px;top:641px;width:21px;height:19px;border-radius:50%;background:#D83A2C"></div><div class="a nw chipn" style="left:322px;top:645px;width:33px">27</div><div class="a" style="left:322px;top:669px;width:33px;height:33px;background:#0C5F16"></div><div class="a" style="left:328px;top:676px;width:21px;height:19px;border-radius:50%;background:#050505"></div><div class="a nw chipn" style="left:322px;top:680px;width:33px">26</div><div class="a" style="left:322px;top:704px;width:33px;height:33px;background:#0C5F16"></div><div class="a" style="left:328px;top:711px;width:21px;height:19px;border-radius:50%;background:#D83A2C"></div><div class="a nw chipn" style="left:322px;top:715px;width:33px">25</div><div class="a" style="left:357px;top:634px;width:33px;height:33px;background:#0C5F16"></div><div class="a" style="left:363px;top:641px;width:21px;height:19px;border-radius:50%;background:#D83A2C"></div><div class="a nw chipn" style="left:357px;top:645px;width:33px">30</div><div class="a" style="left:357px;top:669px;width:33px;height:33px;background:#0C5F16"></div><div class="a" style="left:363px;top:676px;width:21px;height:19px;border-radius:50%;background:#050505"></div><div class="a nw chipn" style="left:357px;top:680px;width:33px">29</div><div class="a" style="left:357px;top:704px;width:33px;height:33px;background:#0C5F16"></div><div class="a" style="left:363px;top:711px;width:21px;height:19px;border-radius:50%;background:#050505"></div><div class="a nw chipn" style="left:357px;top:715px;width:33px">28</div><div class="a" style="left:392px;top:634px;width:33px;height:33px;background:#0C5F16"></div><div class="a" style="left:398px;top:641px;width:21px;height:19px;border-radius:50%;background:#050505"></div><div class="a nw chipn" style="left:392px;top:645px;width:33px">33</div><div class="a" style="left:392px;top:669px;width:33px;height:33px;background:#0C5F16"></div><div class="a" style="left:398px;top:676px;width:21px;height:19px;border-radius:50%;background:#D83A2C"></div><div class="a nw chipn" style="left:392px;top:680px;width:33px">32</div><div class="a" style="left:392px;top:704px;width:33px;height:33px;background:#0C5F16"></div><div class="a" style="left:398px;top:711px;width:21px;height:19px;border-radius:50%;background:#050505"></div><div class="a nw chipn" style="left:392px;top:715px;width:33px">31</div><div class="a" style="left:427px;top:634px;width:33px;height:33px;background:#0C5F16"></div><div class="a" style="left:433px;top:641px;width:21px;height:19px;border-radius:50%;background:#D83A2C"></div><div class="a nw chipn" style="left:427px;top:645px;width:33px">36</div><div class="a" style="left:427px;top:669px;width:33px;height:33px;background:#0C5F16"></div><div class="a" style="left:433px;top:676px;width:21px;height:19px;border-radius:50%;background:#050505"></div><div class="a nw chipn" style="left:427px;top:680px;width:33px">35</div><div class="a" style="left:427px;top:704px;width:33px;height:33px;background:#0C5F16"></div><div class="a" style="left:433px;top:711px;width:21px;height:19px;border-radius:50%;background:#D83A2C"></div><div class="a nw chipn" style="left:427px;top:715px;width:33px">34</div><div class="a" style="left:7px;top:669px;width:33px;height:33px;background:#0C5F16"></div><div class="a" style="left:9px;top:673px;width:29px;height:25px;border-radius:50%;border:1px solid #74C064"></div><div class="a" style="left:20px;top:678px;width:8px;height:16px;border-radius:50%;border:2px solid #E8FFE8"></div>
<div class="a " style="left:4px;top:745px;width:1013px;height:3px;background:linear-gradient(#ACA899,#D8D4C8)"></div>
<div class="a nw " style="left:5px;top:757px;">В последнем спине выпало: 34 красное</div>
<div class="a " style="left:703px;top:750px;width:1px;height:25px;background:#ACA899;box-shadow:1px 0 0 #fff"></div>
<div class="a " style="left:823px;top:750px;width:1px;height:25px;background:#ACA899;box-shadow:1px 0 0 #fff"></div>
<div class="a nw " style="left:708px;top:757px;">Автосмещение : 14</div>
<div class="a nw " style="left:828px;top:757px;">Исходное: 16</div>
<div class="a " style="left:498px;top:34px;width:3px;height:712px;background:#ACA899"></div>
<div class="a " style="left:501px;top:34px;width:2px;height:712px;background:#fff"></div>
<div class="a nw rt" style="left:505px;top:33px;">Ряд Фибоначчи=1 1 2 3 5 8 13 21 34 55 89 144 233 377 610</div>
<div class="a nw rt" style="left:505px;top:49px;">Ряд Tiers = 5 8 10 11 13 16 23 24 27 30 33 36</div>
<div class="a nw rt" style="left:505px;top:65px;">Ряд VdZ = 0 2 3 4 7 12 15 18 19 21 22 25 26 28 29 32 35</div>
<div class="a nw rt" style="left:822px;top:33px;width:191px;overflow:hidden">Ряд Мартингейл=1 2 4 8 16 32 64 128 256</div>
<div class="a nw rt" style="left:822px;top:49px;">Ряд Orph = 1 6 9 14 17 20 31 34</div>
<div class="a nw rt" style="left:822px;top:65px;">Ряд VdZ_zch = 0 3 12 15 26 32 35</div>
<div class="a nw " style="left:506px;top:83px;font-size:17px;line-height:19px;font-weight:bold;letter-spacing:0.2px">Сумма на счете = 0</div>
<div class="a edit" style="left:505px;top:103px;width:171px;height:21px;"><div class="a nw" style="left:3px;top:3px">Функционал PsevdoMS</div><div class="a cbtn" style="left:153px;top:2px;width:15px;height:15px"></div></div>
<div class="a " style="left:686px;top:81px;width:248px;height:41px;border:1px solid;border-color:#ACA899 #fff #fff #ACA899"></div>
<div class="a btn" style="left:691px;top:88px;width:87px;height:25px;"><div class="a nw" style="left:0;width:85px;top:6px;text-align:center">Автоспин старт</div></div>
<div class="a nw " style="left:782px;top:88px;line-height:13.5px">Временная<br>задержка, мс</div>
<div class="a edit" style="left:854px;top:87px;width:73px;height:32px;"><div class="a nw" style="left:3px;top:3px;font-size:20px;line-height:22px">0</div><div class="a spb" style="left:52px;top:1px;width:18px;height:15px"><svg class="a" style="left:4px;top:4px" width="9" height="6"><path d="M0 5 L4.5 0.5 L9 5 Z" fill="#000"/></svg></div><div class="a spb" style="left:52px;top:16px;width:18px;height:14px"><svg class="a" style="left:4px;top:4px" width="9" height="6"><path d="M0 0.5 L4.5 5 L9 0.5 Z" fill="#000"/></svg></div></div>
<div class="a " style="left:502px;top:134px;width:515px;height:2px;border-top:1px solid #ACA899;border-bottom:1px solid #fff"></div>
<div class="a " style="left:503px;top:161px;width:511px;height:422px;background:#FCFCFE;border:1px solid #919B9C;border-top-color:#919B9C"></div>
<div class="a " style="left:505px;top:144px;width:71px;height:18px;background:linear-gradient(#FFFFFF,#ECEBE5);border:1px solid #919B9C;border-bottom:none;border-radius:3px 3px 0 0;overflow:hidden"><div class="a nw" style="left:5px;top:2px;font-size:11px;line-height:14px">Анализатор</div></div>
<div class="a " style="left:577px;top:144px;width:70px;height:18px;background:linear-gradient(#FFFFFF,#ECEBE5);border:1px solid #919B9C;border-bottom:none;border-radius:3px 3px 0 0;overflow:hidden"><div class="a nw" style="left:5px;top:2px;font-size:11px;line-height:14px">Автоставки</div></div>
<div class="a " style="left:648px;top:144px;width:109px;height:18px;background:linear-gradient(#FFFFFF,#ECEBE5);border:1px solid #919B9C;border-bottom:none;border-radius:3px 3px 0 0;overflow:hidden"><div class="a nw" style="left:5px;top:2px;font-size:11px;line-height:14px">Частоты по числам</div></div>
<div class="a " style="left:891px;top:144px;width:92px;height:19px;background:linear-gradient(#FFFFFF,#ECEBE5);border:1px solid #919B9C;border-bottom:none;border-radius:3px 3px 0 0;overflow:hidden"><div class="a nw" style="left:5px;top:3px;font-size:11px;line-height:14px">Контроль банкрот</div></div>
<div class="a " style="left:757px;top:141px;width:135px;height:21px;background:#FCFCFE;border:1px solid #919B9C;border-bottom:none;border-radius:3px 3px 0 0;border-top:3px solid #F4A730;;overflow:hidden"><div class="a nw" style="left:7px;top:1px;font-size:11px;line-height:14px">Функционал PsevdoMS</div></div>
<div class="a " style="left:982px;top:144px;width:31px;height:16px;background:linear-gradient(#E2EBFD,#C3D3FB);border-radius:2px"><svg class="a" style="left:4px;top:3px" width="24" height="10"><path d="M5 1 L1 5 L5 9 Z" fill="#4D6185"/><path d="M19 1 L23 5 L19 9 Z" fill="#4D6185"/></svg></div>
<div class="a " style="left:507px;top:166px;width:504px;height:219px;background:#ECE9D8;border:1px solid;border-color:#716F64 #fff #fff #716F64;box-shadow:inset 1px 1px 0 #ACA899"></div>
<div class="a btn" style="left:510px;top:173px;width:135px;height:30px;"><div class="a nw" style="left:0;width:133px;top:5px;text-align:center;font-size:17px;line-height:19px;font-weight:bold">Сгенерировать</div></div>
<div class="a chk" style="left:652px;top:173px;width:13px;height:13px;"></div>
<div class="a nw " style="left:669px;top:172px;font-size:16.6px;line-height:18px">Показывать в строке статуса</div>
<div class="a chk" style="left:652px;top:191px;width:13px;height:13px;"><svg class="a" style="left:2px;top:2px" width="9" height="9"><path d="M1 4 L3.5 6.5 L8 1.5" fill="none" stroke="#21A121" stroke-width="2"/></svg></div>
<div class="a nw " style="left:668px;top:190px;font-size:14.2px;line-height:16px">Генерировать на каждый спин автоматически</div>
<div class="a " style="left:512px;top:208px;width:54px;height:28px;background:#fff;border:1px solid #7F9DB9"><div class="a" style="left:1px;top:1px;width:35px;height:24px;background:#C0DCC0"></div><div class="a nw" style="left:3px;top:4px;font-size:17px;line-height:20px;font-weight:bold">7</div><div class="a cbtn" style="left:36px;top:2px;width:15px;height:22px"></div></div>
<div class="a nw " style="left:569px;top:215px;font-size:14.15px;line-height:16px">- количество случайно генерируемых номеров</div>
<div class="a nw " style="left:880px;top:212px;font-size:16px;line-height:18px">В плюс</div>
<div class="a " style="left:879px;top:232px;width:57px;height:21px;background:#C0DCC0;border:1px solid #7F9DB9"><div class="a nw" style="left:3px;top:2px;font-size:13px;line-height:15px">3</div></div>
<div class="a nw " style="left:880px;top:260px;font-size:16px;line-height:18px">В минус</div>
<div class="a " style="left:879px;top:280px;width:57px;height:21px;background:#C0DCC0;border:1px solid #7F9DB9"><div class="a nw" style="left:3px;top:2px;font-size:13px;line-height:15px">9</div></div>
<div class="a " style="left:509px;top:240px;width:369px;height:64px;background:#C0DCC0;border:1px solid #7F9DB9"><div class="a nw" style="left:3px;top:3px;font-size:11.6px;letter-spacing:-0.38px">1) 27; 2) 24; 3) 31; 4) 33; 5) 19; 6) 32; 7) 28;</div><div class="a" style="left:349px;top:1px;width:17px;height:60px;background:#FAF9F4"></div><div class="a dsb" style="left:350px;top:2px;width:16px;height:16px"><svg class="a" style="left:3px;top:4px" width="9" height="6"><path d="M0.5 5 L4.5 1 L8.5 5" fill="none" stroke="#C8C6B8" stroke-width="2"/></svg></div><div class="a dsb" style="left:350px;top:45px;width:16px;height:16px"><svg class="a" style="left:3px;top:5px" width="9" height="6"><path d="M0.5 1 L4.5 5 L8.5 1" fill="none" stroke="#C8C6B8" stroke-width="2"/></svg></div></div>
<div class="a btn" style="left:510px;top:309px;width:176px;height:30px;text-align:left"><div class="a nw" style="left:35px;top:8px;font-size:17px;font-weight:bold">В буфер строку</div></div>
<div class="a icoarea" style="left:519px;top:314px;width:21px;height:20px"></div>
<svg class="a" style="left:522px;top:316px" width="16" height="15" viewBox="0 0 16 15"><path d="M0.5 0.5 H6.5 L8.5 2.5 V10.5 H0.5 Z" fill="#fff" stroke="#4A68A8"/><path d="M2 3.5 H6 M2 5.5 H6 M2 7.5 H6" stroke="#3A58A0" stroke-width="1"/><path d="M6.5 4.5 H12.5 L14.5 6.5 V14.5 H6.5 Z" fill="#fff" stroke="#3A58A0"/><path d="M8 7.5 H13 M8 9.5 H13 M8 11.5 H13" stroke="#3A58A0" stroke-width="1"/></svg>
<div class="a btn" style="left:690px;top:309px;width:175px;height:30px;text-align:left"><div class="a nw" style="left:27px;top:8px;font-size:17px;font-weight:bold">В буфер таблицу</div></div>
<div class="a icoarea" style="left:695px;top:314px;width:21px;height:20px"></div>
<svg class="a" style="left:698px;top:316px" width="16" height="15" viewBox="0 0 16 15"><path d="M0.5 0.5 H6.5 L8.5 2.5 V10.5 H0.5 Z" fill="#fff" stroke="#4A68A8"/><path d="M2 3.5 H6 M2 5.5 H6 M2 7.5 H6" stroke="#3A58A0" stroke-width="1"/><path d="M6.5 4.5 H12.5 L14.5 6.5 V14.5 H6.5 Z" fill="#fff" stroke="#3A58A0"/><path d="M8 7.5 H13 M8 9.5 H13 M8 11.5 H13" stroke="#3A58A0" stroke-width="1"/></svg>
<div class="a btn" style="left:870px;top:309px;width:80px;height:23px;text-align:left"><div class="a icoarea" style="left:3px;top:1px;width:22px;height:19px"></div><svg class="a" style="left:5px;top:3px" width="18" height="17" viewBox="0 0 18 17"><path d="M11 6 L16.5 0.8" stroke="#3A2E88" stroke-width="3.2" stroke-linecap="round"/><path d="M11 6 L16.2 1.2" stroke="#8A7AD8" stroke-width="1.2" stroke-linecap="round"/><path d="M7.5 9 L12 5" stroke="#7A7A88" stroke-width="4.6"/><path d="M8 8.5 L11.5 5.5" stroke="#E8E8F0" stroke-width="2"/><path d="M0.8 14.5 L2.5 9 L6.5 6.8 L10.5 10.5 L8 15 L3 16.5 Z" fill="#F0DC78" stroke="#8A6A20" stroke-width="0.9"/><path d="M3 13 L7 9" stroke="#C8A840" stroke-width="0.8"/></svg><div class="a nw" style="left:27px;top:4px;font-size:11px;font-weight:normal">Очистить</div></div>
<div class="a btn" style="left:515px;top:345px;width:138px;height:35px;"><div class="a nw" style="left:20px;width:118px;top:4px;text-align:center;line-height:13px;font-size:11.5px">Автозаполнение<br>вспом. строки МД5</div></div>
<svg class="a" style="left:522px;top:353px" width="18" height="18" viewBox="0 0 18 18"><circle cx="9" cy="9" r="7.9" fill="#14EE4A" stroke="#000" stroke-width="2"/><text x="9.5" y="8.3" text-anchor="middle" font-family="Liberation Sans" font-size="6.8" fill="#000" letter-spacing="0.8">МД</text><text x="6" y="14.5" text-anchor="middle" font-family="Liberation Sans" font-size="8" fill="#000">5</text><path d="M8.8 9.5 L12.3 12 L8.8 14.8 Z" fill="#1028F8"/></svg>
<div class="a btn" style="left:663px;top:344px;width:150px;height:34px;"><div class="a nw" style="left:30px;width:118px;top:5px;text-align:center;line-height:13px;font-size:11.5px">Проверить МД5<br>после спина</div></div>
<svg class="a" style="left:686px;top:352px" width="18" height="18" viewBox="0 0 18 18"><circle cx="9" cy="9" r="7.9" fill="#14EE4A" stroke="#000" stroke-width="2"/><text x="9.5" y="8.3" text-anchor="middle" font-family="Liberation Sans" font-size="6.8" fill="#000" letter-spacing="0.8">МД</text><text x="9" y="14.5" text-anchor="middle" font-family="Liberation Sans" font-size="8" fill="#000">5</text></svg>
<div class="a btn" style="left:820px;top:344px;width:149px;height:34px;"><div class="a nw" style="left:40px;width:92px;top:5px;text-align:center;line-height:13px;font-size:11.5px">Автоставка<br>случайных</div></div>
<svg class="a" style="left:854px;top:352px" width="18" height="18" viewBox="0 0 18 18"><circle cx="9" cy="9" r="7.9" fill="#14EE4A" stroke="#000" stroke-width="2"/><text x="9.5" y="8.3" text-anchor="middle" font-family="Liberation Sans" font-size="6.8" fill="#000" letter-spacing="0.8">ГС</text><text x="9" y="14.5" text-anchor="middle" font-family="Liberation Sans" font-size="8" fill="#000">Ч</text></svg>
<div class="a " style="left:509px;top:388px;width:499px;height:190px;background:#fff;border:1px solid #7F9DB9"></div>
<div class="a" style="left:510px;top:389px;width:481px;height:188px;background:#000080"></div><div class="a nw gc" style="left:510px;top:389px;width:38px;height:17px;background:#C0DCC0;text-align:left;padding-left:2px;font-size:13px;white-space:pre;word-spacing:0.9px;padding-top:1px">Спин</div><div class="a nw gc" style="left:549px;top:389px;width:39px;height:17px;background:#C0DCC0;text-align:left;padding-left:2px;font-size:13px;white-space:pre;word-spacing:0.9px;padding-top:1px">Вы...</div><div class="a nw gc" style="left:589px;top:389px;width:381px;height:17px;background:#C0DCC0;text-align:center;padding-left:2px;font-size:14px;white-space:pre;word-spacing:0.9px;padding-top:1px"><span style="position:relative;top:1px">Сгенерированные случайные числа</span></div><div class="a nw gc" style="left:971px;top:389px;width:19px;height:17px;background:#fff;text-align:left;padding-left:2px;font-size:12px;white-space:pre;word-spacing:0.9px;padding-top:1px"></div><div class="a nw gc" style="left:510px;top:407px;width:38px;height:16px;background:#C0DCC0;text-align:left;padding-left:2px;font-size:13px;white-space:pre;word-spacing:0.9px;padding-top:1px">35</div><div class="a nw gc" style="left:549px;top:407px;width:39px;height:16px;background:#C0DCC0;text-align:left;padding-left:2px;font-size:13px;white-space:pre;word-spacing:0.9px;padding-top:1px"></div><div class="a nw gc" style="left:589px;top:407px;width:381px;height:16px;background:#C0DCC0;text-align:center;padding-left:9px;font-size:13px;white-space:pre;word-spacing:0.9px;padding-top:1px">27  24  31  33  19  32  28</div><div class="a nw gc" style="left:971px;top:407px;width:19px;height:16px;background:#fff;text-align:left;padding-left:2px;font-size:12px;white-space:pre;word-spacing:0.9px;padding-top:1px"></div><div class="a nw gc" style="left:510px;top:424px;width:38px;height:16px;background:#C0DCC0;text-align:left;padding-left:2px;font-size:13px;white-space:pre;word-spacing:0.9px;padding-top:1px">34</div><div class="a nw gc" style="left:549px;top:424px;width:39px;height:16px;background:#C0DCC0;text-align:left;padding-left:2px;font-size:13px;white-space:pre;word-spacing:0.9px;padding-top:1px">34</div><div class="a nw gc" style="left:589px;top:424px;width:381px;height:16px;background:#C0DCC0;text-align:center;padding-left:9px;font-size:13px;white-space:pre;word-spacing:0.9px;padding-top:1px">13  36  29  3  20  26  1</div><div class="a nw gc" style="left:971px;top:424px;width:19px;height:16px;background:#FF6666;text-align:left;padding-left:2px;font-size:12px;white-space:pre;word-spacing:0.9px;padding-top:1px">-</div><div class="a nw gc" style="left:510px;top:441px;width:38px;height:16px;background:#C0DCC0;text-align:left;padding-left:2px;font-size:13px;white-space:pre;word-spacing:0.9px;padding-top:1px">33</div><div class="a nw gc" style="left:549px;top:441px;width:39px;height:16px;background:#C0DCC0;text-align:left;padding-left:2px;font-size:13px;white-space:pre;word-spacing:0.9px;padding-top:1px">17</div><div class="a nw gc" style="left:589px;top:441px;width:381px;height:16px;background:#C0DCC0;text-align:center;padding-left:9px;font-size:13px;white-space:pre;word-spacing:0.9px;padding-top:1px">15  19  1  9  4  28  30</div><div class="a nw gc" style="left:971px;top:441px;width:19px;height:16px;background:#FF6666;text-align:left;padding-left:2px;font-size:12px;white-space:pre;word-spacing:0.9px;padding-top:1px">-</div><div class="a nw gc" style="left:510px;top:458px;width:38px;height:16px;background:#C0DCC0;text-align:left;padding-left:2px;font-size:13px;white-space:pre;word-spacing:0.9px;padding-top:1px">32</div><div class="a nw gc" style="left:549px;top:458px;width:39px;height:16px;background:#C0DCC0;text-align:left;padding-left:2px;font-size:13px;white-space:pre;word-spacing:0.9px;padding-top:1px">34</div><div class="a nw gc" style="left:589px;top:458px;width:381px;height:16px;background:#C0DCC0;text-align:center;padding-left:9px;font-size:13px;white-space:pre;word-spacing:0.9px;padding-top:1px">19  3  26  18  6  35  25</div><div class="a nw gc" style="left:971px;top:458px;width:19px;height:16px;background:#FF6666;text-align:left;padding-left:2px;font-size:12px;white-space:pre;word-spacing:0.9px;padding-top:1px">-</div><div class="a nw gc" style="left:510px;top:475px;width:38px;height:16px;background:#C0DCC0;text-align:left;padding-left:2px;font-size:13px;white-space:pre;word-spacing:0.9px;padding-top:1px">31</div><div class="a nw gc" style="left:549px;top:475px;width:39px;height:16px;background:#C0DCC0;text-align:left;padding-left:2px;font-size:13px;white-space:pre;word-spacing:0.9px;padding-top:1px">3</div><div class="a nw gc" style="left:589px;top:475px;width:381px;height:16px;background:#C0DCC0;text-align:center;padding-left:9px;font-size:13px;white-space:pre;word-spacing:0.9px;padding-top:1px">16  2  12  19  22  34  33</div><div class="a nw gc" style="left:971px;top:475px;width:19px;height:16px;background:#FF6666;text-align:left;padding-left:2px;font-size:12px;white-space:pre;word-spacing:0.9px;padding-top:1px">-</div><div class="a nw gc" style="left:510px;top:492px;width:38px;height:16px;background:#C0DCC0;text-align:left;padding-left:2px;font-size:13px;white-space:pre;word-spacing:0.9px;padding-top:1px">30</div><div class="a nw gc" style="left:549px;top:492px;width:39px;height:16px;background:#C0DCC0;text-align:left;padding-left:2px;font-size:13px;white-space:pre;word-spacing:0.9px;padding-top:1px">31</div><div class="a nw gc" style="left:589px;top:492px;width:381px;height:16px;background:#C0DCC0;text-align:center;padding-left:9px;font-size:13px;white-space:pre;word-spacing:0.9px;padding-top:1px">31  25  29  33  1  24  2</div><div class="a nw gc" style="left:971px;top:492px;width:19px;height:16px;background:#00E000;text-align:left;padding-left:2px;font-size:12px;white-space:pre;word-spacing:0.9px;padding-top:1px">+</div><div class="a nw gc" style="left:510px;top:509px;width:38px;height:16px;background:#C0DCC0;text-align:left;padding-left:2px;font-size:13px;white-space:pre;word-spacing:0.9px;padding-top:1px">7</div><div class="a nw gc" style="left:549px;top:509px;width:39px;height:16px;background:#C0DCC0;text-align:left;padding-left:2px;font-size:13px;white-space:pre;word-spacing:0.9px;padding-top:1px">16</div><div class="a nw gc" style="left:589px;top:509px;width:381px;height:16px;background:#C0DCC0;text-align:center;padding-left:9px;font-size:13px;white-space:pre;word-spacing:0.9px;padding-top:1px">21  24  4  6  32  15  34</div><div class="a nw gc" style="left:971px;top:509px;width:19px;height:16px;background:#FF6666;text-align:left;padding-left:2px;font-size:12px;white-space:pre;word-spacing:0.9px;padding-top:1px">-</div><div class="a nw gc" style="left:510px;top:526px;width:38px;height:16px;background:#C0DCC0;text-align:left;padding-left:2px;font-size:13px;white-space:pre;word-spacing:0.9px;padding-top:1px">6</div><div class="a nw gc" style="left:549px;top:526px;width:39px;height:16px;background:#C0DCC0;text-align:left;padding-left:2px;font-size:13px;white-space:pre;word-spacing:0.9px;padding-top:1px">23</div><div class="a nw gc" style="left:589px;top:526px;width:381px;height:16px;background:#C0DCC0;text-align:center;padding-left:9px;font-size:13px;white-space:pre;word-spacing:0.9px;padding-top:1px">7  25  27  10  3  22  17</div><div class="a nw gc" style="left:971px;top:526px;width:19px;height:16px;background:#FF6666;text-align:left;padding-left:2px;font-size:12px;white-space:pre;word-spacing:0.9px;padding-top:1px">-</div><div class="a nw gc" style="left:510px;top:543px;width:38px;height:16px;background:#C0DCC0;text-align:left;padding-left:2px;font-size:13px;white-space:pre;word-spacing:0.9px;padding-top:1px">5</div><div class="a nw gc" style="left:549px;top:543px;width:39px;height:16px;background:#C0DCC0;text-align:left;padding-left:2px;font-size:13px;white-space:pre;word-spacing:0.9px;padding-top:1px">2</div><div class="a nw gc" style="left:589px;top:543px;width:381px;height:16px;background:#C0DCC0;text-align:center;padding-left:9px;font-size:13px;white-space:pre;word-spacing:0.9px;padding-top:1px">18  2  5  30  34  9  20</div><div class="a nw gc" style="left:971px;top:543px;width:19px;height:16px;background:#00E000;text-align:left;padding-left:2px;font-size:12px;white-space:pre;word-spacing:0.9px;padding-top:1px">+</div><div class="a nw gc" style="left:510px;top:560px;width:38px;height:16px;background:#C0DCC0;text-align:left;padding-left:2px;font-size:13px;white-space:pre;word-spacing:0.9px;padding-top:1px">4</div><div class="a nw gc" style="left:549px;top:560px;width:39px;height:16px;background:#C0DCC0;text-align:left;padding-left:2px;font-size:13px;white-space:pre;word-spacing:0.9px;padding-top:1px">8</div><div class="a nw gc" style="left:589px;top:560px;width:381px;height:16px;background:#C0DCC0;text-align:center;padding-left:9px;font-size:13px;white-space:pre;word-spacing:0.9px;padding-top:1px">5  1  26  0  12  3  33</div><div class="a nw gc" style="left:971px;top:560px;width:19px;height:16px;background:#FF6666;text-align:left;padding-left:2px;font-size:12px;white-space:pre;word-spacing:0.9px;padding-top:1px">-</div>
<div class="a " style="left:991px;top:389px;width:16px;height:188px;background:linear-gradient(90deg,#F3F1EC,#FEFEFB)"></div>
<div class="a sbtn" style="left:991px;top:390px;width:16px;height:16px;"><svg class="a" style="left:3px;top:4px" width="9" height="6"><path d="M0.5 5 L4.5 1 L8.5 5" fill="none" stroke="#4D6185" stroke-width="2"/></svg></div>
<div class="a sthumb" style="left:991px;top:407px;width:16px;height:121px;"><div class="a" style="left:4px;top:56px;width:7px;height:7px;border-top:1px solid #8CA0D8;border-bottom:1px solid #8CA0D8"><div class="a" style="left:0;top:2px;width:7px;height:1px;background:#8CA0D8"></div></div></div>
<div class="a sbtn" style="left:991px;top:560px;width:16px;height:16px;"><svg class="a" style="left:3px;top:5px" width="9" height="6"><path d="M0.5 1 L4.5 5 L8.5 1" fill="none" stroke="#4D6185" stroke-width="2"/></svg></div>
<div class="a " style="left:503px;top:606px;width:511px;height:137px;background:linear-gradient(#FCFCFE,#F4F3EE);border:1px solid #919B9C"></div>
<div class="a " style="left:504px;top:589px;width:220px;height:18px;background:linear-gradient(#FFFFFF,#ECEBE5);border:1px solid #919B9C;border-bottom:none;border-radius:3px 3px 0 0;overflow:hidden"><div class="a nw" style="left:5px;top:2px;font-size:11px;line-height:14px"><span style="letter-spacing:0.05px">Частота - Zero, шансы, дюжины, колонки</span></div></div>
<div class="a " style="left:725px;top:589px;width:160px;height:18px;background:linear-gradient(#FFFFFF,#ECEBE5);border:1px solid #919B9C;border-bottom:none;border-radius:3px 3px 0 0;overflow:hidden"><div class="a nw" style="left:5px;top:2px;font-size:11px;line-height:14px"><span style="letter-spacing:0.2px">Частота - сиклайны, сектора</span></div></div>
<div class="a " style="left:884px;top:587px;width:46px;height:21px;background:#FCFCFE;border:1px solid #919B9C;border-bottom:none;border-radius:3px 3px 0 0;border-top:3px solid #F4A730;;overflow:hidden"><div class="a nw" style="left:8px;top:1px;font-size:11.5px;line-height:14px">MD5</div></div>
<div class="a btn" style="left:508px;top:617px;width:71px;height:90px;"><div class="a nw" style="left:0;width:69px;top:26px;text-align:center;line-height:13px;font-size:11px">Очистка<br>Вставка<br>Расчет MD5</div></div>
<div class="a btn" style="left:583px;top:617px;width:79px;height:18px;"><div class="a nw" style="left:0;width:77px;top:2px;text-align:center;font-size:11px">Очистить</div></div>
<div class="a btn" style="left:583px;top:641px;width:79px;height:31px;"><div class="a nw" style="left:0;width:77px;top:3px;text-align:center;line-height:12.5px;font-size:11px">Очистить и<br>вставить</div></div>
<div class="a btn" style="left:583px;top:676px;width:79px;height:31px;"><div class="a nw" style="left:0;width:77px;top:8px;text-align:center;font-size:11px">Расчет MD5</div></div>
<div class="a btn" style="left:511px;top:712px;width:148px;height:29px;overflow:hidden"><div class="a nw" style="left:0;width:146px;top:3px;text-align:center;line-height:13px;font-size:11px">Очистить и&nbsp; вставить<br>во вспом. строку</div></div>
<div class="a nw " style="left:668px;top:611px;font-size:11px">Исходная строка</div>
<div class="a edit" style="left:667px;top:627px;width:285px;height:21px;"></div>
<div class="a nw " style="left:668px;top:656px;font-size:11px">Выходная строка MD5</div>
<div class="a chk" style="left:803px;top:653px;width:14px;height:14px;"></div>
<div class="a nw " style="left:820px;top:654px;font-size:11px">регистр&nbsp; - маленький</div>
<div class="a edit" style="left:667px;top:672px;width:285px;height:21px;"></div>
<div class="a nw " style="left:668px;top:697px;font-size:11px">Вспомогательная строка: сюда можно все скопировать</div>
<div class="a edit" style="left:667px;top:712px;width:285px;height:21px;"></div>
<div class="a btn" style="left:956px;top:628px;width:23px;height:24px;border-radius:2px"></div>
<svg class="a" style="left:958px;top:631px" width="18" height="18" viewBox="0 0 18 18"><circle cx="9" cy="9" r="7.9" fill="#14EE4A" stroke="#000" stroke-width="2"/><text x="9.5" y="8.3" text-anchor="middle" font-family="Liberation Sans" font-size="6.8" fill="#000" letter-spacing="0.8">МД</text><text x="9" y="14.5" text-anchor="middle" font-family="Liberation Sans" font-size="8" fill="#000">5</text></svg>
<div class="a btn" style="left:956px;top:708px;width:23px;height:24px;border-radius:2px"></div>
<svg class="a" style="left:958px;top:711px" width="18" height="18" viewBox="0 0 18 18"><circle cx="9" cy="9" r="7.9" fill="#14EE4A" stroke="#000" stroke-width="2"/><text x="9.5" y="8.3" text-anchor="middle" font-family="Liberation Sans" font-size="6.8" fill="#000" letter-spacing="0.8">МД</text><text x="6" y="14.5" text-anchor="middle" font-family="Liberation Sans" font-size="8" fill="#000">5</text><path d="M8.8 9.5 L12.3 12 L8.8 14.8 Z" fill="#1028F8"/></svg>
<div class="a" style="left:1012px;top:762px;width:2px;height:2px;background:#ACA899;box-shadow:1px 1px 0 #fff"></div><div class="a" style="left:1008px;top:766px;width:2px;height:2px;background:#ACA899;box-shadow:1px 1px 0 #fff"></div><div class="a" style="left:1012px;top:766px;width:2px;height:2px;background:#ACA899;box-shadow:1px 1px 0 #fff"></div><div class="a" style="left:1004px;top:770px;width:2px;height:2px;background:#ACA899;box-shadow:1px 1px 0 #fff"></div><div class="a" style="left:1008px;top:770px;width:2px;height:2px;background:#ACA899;box-shadow:1px 1px 0 #fff"></div><div class="a" style="left:1012px;top:770px;width:2px;height:2px;background:#ACA899;box-shadow:1px 1px 0 #fff"></div></body></html>
